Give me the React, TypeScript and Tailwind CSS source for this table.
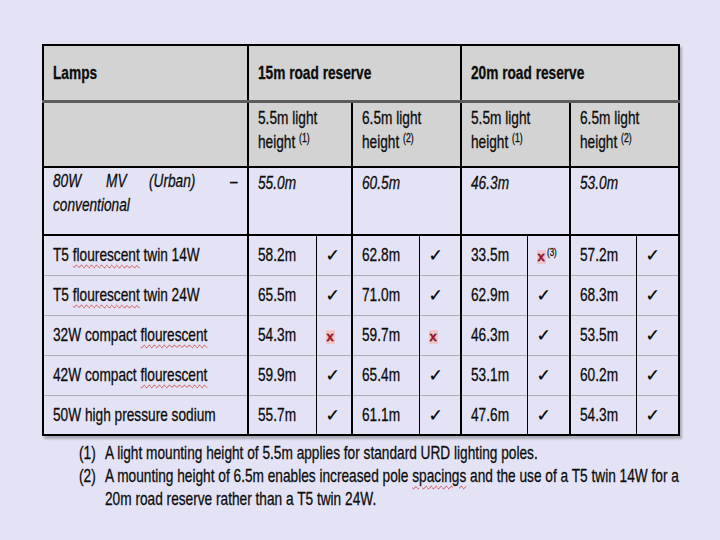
import React from "react";

type Mark = "ok" | "no" | "no3";

const rows: { lamp: string; vals: [string, Mark][] }[] = [
  { lamp: "T5 flourescent twin 14W", vals: [["58.2m", "ok"], ["62.8m", "ok"], ["33.5m", "no3"], ["57.2m", "ok"]] },
  { lamp: "T5 flourescent twin 24W", vals: [["65.5m", "ok"], ["71.0m", "ok"], ["62.9m", "ok"], ["68.3m", "ok"]] },
  { lamp: "32W compact flourescent", vals: [["54.3m", "no"], ["59.7m", "no"], ["46.3m", "ok"], ["53.5m", "ok"]] },
  { lamp: "42W compact flourescent", vals: [["59.9m", "ok"], ["65.4m", "ok"], ["53.1m", "ok"], ["60.2m", "ok"]] },
  { lamp: "50W high pressure sodium", vals: [["55.7m", "ok"], ["61.1m", "ok"], ["47.6m", "ok"], ["54.3m", "ok"]] },
];

// condensed text: the source font is a narrow grotesque, so squeeze Liberation Sans
function T({ children, className = "" }: { children: React.ReactNode; className?: string }) {
  return <span className={`inline-block whitespace-nowrap origin-left scale-x-[0.72] ${className}`}>{children}</span>;
}

function Squiggle({ children }: { children: React.ReactNode }) {
  return <span className="underline decoration-wavy decoration-[#d04040] decoration-[1px] underline-offset-[3px]">{children}</span>;
}

function lampLabel(s: string) {
  const i = s.indexOf("flourescent");
  if (i < 0) return s;
  return (
    <>
      {s.slice(0, i)}
      <Squiggle>flourescent</Squiggle>
      {s.slice(i + 11)}
    </>
  );
}

function MarkCell({ m }: { m: Mark }) {
  if (m === "ok") return <span className="text-[17px] font-['DejaVu_Sans',sans-serif] text-black">✓</span>;
  return (
    <span className="inline-flex items-start">
      <span className="bg-[#f1c6cb] px-[1px] text-[13px] leading-[14px] font-bold text-[#c4102b]">x</span>
      {m === "no3" && (
        <T className="text-[11px] leading-[11px] ml-[1px] -mt-[3px]">(3)</T>
      )}
    </span>
  );
}

function HeadSub({ n }: { n: string }) {
  return (
    <div className="leading-[24px]">
      <T>{n}m light</T>
      <br />
      <T>
        height <span className="relative -top-[6px] text-[12px]">{n === "5.5" ? "(1)" : "(2)"}</span>
      </T>
    </div>
  );
}

export default function App() {
  return (
    <div className="w-[720px] h-[540px] overflow-hidden bg-[#e3e3f5] pt-[44px] pl-[42px] font-['Liberation_Sans',Arial,sans-serif] text-[#0c0c0c] [-webkit-text-stroke:0.3px_#0c0c0c]">
      <table className="table-fixed border-collapse w-[636px] border-2 border-black shadow-[2px_3px_2px_rgba(0,0,0,0.25)] text-[19px]">
        <colgroup>
          <col className="w-[205px]" />
          <col className="w-[68px]" />
          <col className="w-[36px]" />
          <col className="w-[67px]" />
          <col className="w-[42px]" />
          <col className="w-[66px]" />
          <col className="w-[43px]" />
          <col className="w-[66px]" />
          <col className="w-[43px]" />
        </colgroup>
        <thead>
          <tr className="h-[56px] bg-[#d3d3d3] border-b-[3px] border-[#5c5c5c] font-bold">
            <td className="px-[9px] border-r-2 border-black align-middle"><T>Lamps</T></td>
            <td colSpan={4} className="px-[9px] border-r-2 border-black"><T>15m road reserve</T></td>
            <td colSpan={4} className="px-[9px]"><T>20m road reserve</T></td>
          </tr>
          <tr className="h-[66px] bg-[#d3d3d3] border-b-2 border-black align-top">
            <td className="border-r-2 border-black"></td>
            <td colSpan={2} className="px-[9px] pt-[3px] border-r-2 border-black"><HeadSub n="5.5" /></td>
            <td colSpan={2} className="px-[9px] pt-[3px] border-r-2 border-black"><HeadSub n="6.5" /></td>
            <td colSpan={2} className="px-[9px] pt-[3px] border-r-2 border-black"><HeadSub n="5.5" /></td>
            <td colSpan={2} className="px-[9px] pt-[3px]"><HeadSub n="6.5" /></td>
          </tr>
        </thead>
        <tbody>
          <tr className="h-[68px] align-top italic border-b-2 border-black">
            <td className="px-[9px] pt-[1px] border-r-2 border-black leading-[24px]">
              <div className="flex justify-between">
                <T>80W</T>
                <T className="origin-center">MV</T>
                <T className="origin-center">(Urban)</T>
                <T className="origin-right">–</T>
              </div>
              <div><T>conventional</T></div>
            </td>
            <td colSpan={2} className="px-[9px] pt-[1px] border-r-2 border-black"><T>55.0m</T></td>
            <td colSpan={2} className="px-[9px] pt-[1px] border-r-2 border-black"><T>60.5m</T></td>
            <td colSpan={2} className="px-[9px] pt-[1px] border-r-2 border-black"><T>46.3m</T></td>
            <td colSpan={2} className="px-[9px] pt-[1px]"><T>53.0m</T></td>
          </tr>
          {rows.map((r, ri) => (
            <tr key={ri} className={`h-[40px] ${ri < rows.length - 1 ? "border-b border-[#aeaebb]" : ""}`}>
              <td className="px-[9px] border-r-2 border-black"><T>{lampLabel(r.lamp)}</T></td>
              {r.vals.map(([v, m], i) => (
                <React.Fragment key={i}>
                  <td className="px-[9px] border-r border-black"><T>{v}</T></td>
                  <td className={`pl-[9px] align-middle ${i < 3 ? "border-r-2 border-black" : ""}`}>
                    <MarkCell m={m} />
                  </td>
                </React.Fragment>
              ))}
            </tr>
          ))}
        </tbody>
      </table>
      <div className="ml-[37px] mt-[5px] text-[19px] leading-[23px]">
        <div className="flex">
          <span className="w-[26px] shrink-0"><T>(1)</T></span>
          <T>A light mounting height of 5.5m applies for standard URD lighting poles.</T>
        </div>
        <div className="flex">
          <span className="w-[26px] shrink-0"><T>(2)</T></span>
          <div>
            <T>
              A mounting height of 6.5m enables increased pole <Squiggle>spacings</Squiggle> and the use of a T5 twin 14W for a
            </T>
            <br />
            <T>20m road reserve rather than a T5 twin 24W.</T>
          </div>
        </div>
      </div>
    </div>
  );
}
